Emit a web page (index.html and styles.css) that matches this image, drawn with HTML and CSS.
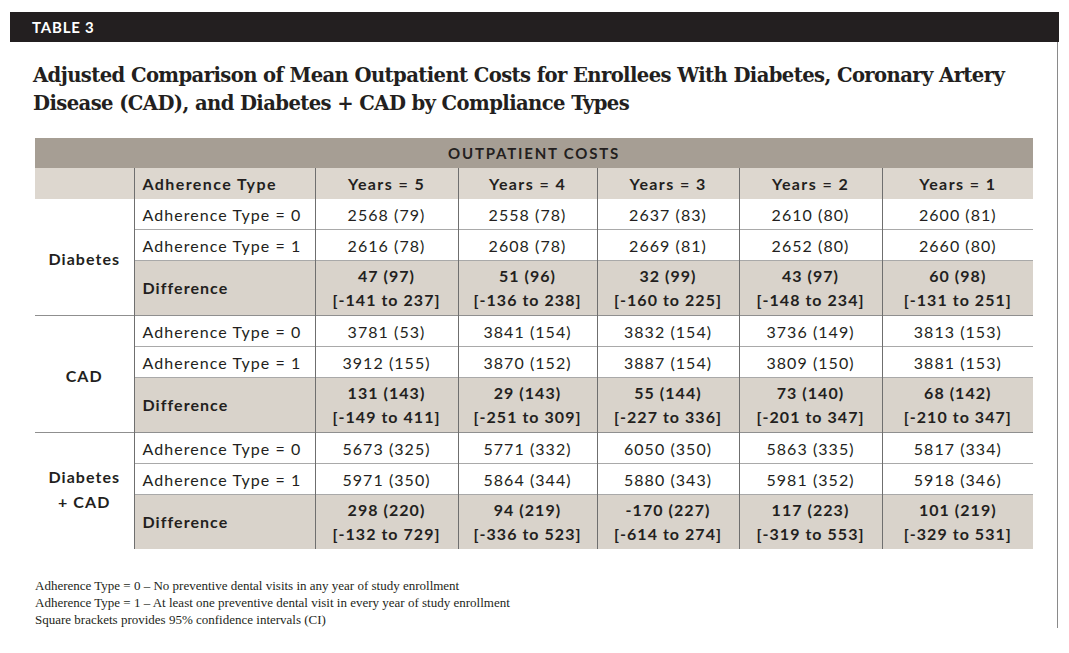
FILE: index.html
```html
<!DOCTYPE html>
<html>
<head>
<meta charset="utf-8">
<link rel="stylesheet" href="styles.css">
</head>
<body>
<div class="frame">
  <div class="bar">TABLE 3</div>
  <h1 class="title">Adjusted Comparison of Mean Outpatient Costs for Enrollees With Diabetes, Coronary Artery Disease (CAD), and Diabetes + CAD by Compliance Types</h1>
  <table class="data">
    <colgroup>
      <col class="c0"><col class="c1"><col class="c2"><col class="c3"><col class="c4"><col class="c5"><col class="c6">
    </colgroup>
    <thead>
      <tr class="h1row"><th colspan="7">OUTPATIENT COSTS</th></tr>
      <tr class="h2row">
        <th class="blank"></th>
        <th class="lab">Adherence Type</th>
        <th>Years = 5</th><th>Years = 4</th><th>Years = 3</th><th>Years = 2</th><th>Years = 1</th>
      </tr>
    </thead>
    <tbody>
      <tr class="r0 first">
        <td class="grp" rowspan="3">Diabetes</td>
        <td class="lab">Adherence Type = 0</td>
        <td>2568 (79)</td><td>2558 (78)</td><td>2637 (83)</td><td>2610 (80)</td><td>2600 (81)</td>
      </tr>
      <tr class="r1">
        <td class="lab">Adherence Type = 1</td>
        <td>2616 (78)</td><td>2608 (78)</td><td>2669 (81)</td><td>2652 (80)</td><td>2660 (80)</td>
      </tr>
      <tr class="diff">
        <td class="lab">Difference</td>
        <td>47 (97)<br>[-141 to 237]</td><td>51 (96)<br>[-136 to 238]</td><td>32 (99)<br>[-160 to 225]</td><td>43 (97)<br>[-148 to 234]</td><td>60 (98)<br>[-131 to 251]</td>
      </tr>
      <tr class="r0 sep">
        <td class="grp" rowspan="3">CAD</td>
        <td class="lab">Adherence Type = 0</td>
        <td>3781 (53)</td><td>3841 (154)</td><td>3832 (154)</td><td>3736 (149)</td><td>3813 (153)</td>
      </tr>
      <tr class="r1">
        <td class="lab">Adherence Type = 1</td>
        <td>3912 (155)</td><td>3870 (152)</td><td>3887 (154)</td><td>3809 (150)</td><td>3881 (153)</td>
      </tr>
      <tr class="diff">
        <td class="lab">Difference</td>
        <td>131 (143)<br>[-149 to 411]</td><td>29 (143)<br>[-251 to 309]</td><td>55 (144)<br>[-227 to 336]</td><td>73 (140)<br>[-201 to 347]</td><td>68 (142)<br>[-210 to 347]</td>
      </tr>
      <tr class="r0 sep">
        <td class="grp two" rowspan="3">Diabetes<br>+ CAD</td>
        <td class="lab">Adherence Type = 0</td>
        <td>5673 (325)</td><td>5771 (332)</td><td>6050 (350)</td><td>5863 (335)</td><td>5817 (334)</td>
      </tr>
      <tr class="r1">
        <td class="lab">Adherence Type = 1</td>
        <td>5971 (350)</td><td>5864 (344)</td><td>5880 (343)</td><td>5981 (352)</td><td>5918 (346)</td>
      </tr>
      <tr class="diff">
        <td class="lab">Difference</td>
        <td>298 (220)<br>[-132 to 729]</td><td>94 (219)<br>[-336 to 523]</td><td>-170 (227)<br>[-614 to 274]</td><td>117 (223)<br>[-319 to 553]</td><td>101 (219)<br>[-329 to 531]</td>
      </tr>
    </tbody>
  </table>
  <div class="notes">
    <p>Adherence Type = 0 – No preventive dental visits in any year of study enrollment</p>
    <p>Adherence Type = 1 – At least one preventive dental visit in every year of study enrollment</p>
    <p>Square brackets provides 95% confidence intervals (CI)</p>
  </div>
</div>
</body>
</html>
```
FILE: styles.css
```css
html, body {
  margin: 0;
  padding: 0;
  background: #ffffff;
}

.frame {
  margin: 12px 0 0 10px;
  width: 1048px;
  min-height: 613px;
  border-right: 1px solid #8a8a8a;
  box-sizing: border-box;
}

.bar {
  background: #231f20;
  height: 30px;
  margin-right: -2px;
  color: #ffffff;
  font-family: "Lato", "Liberation Sans", sans-serif;
  font-weight: 700;
  font-size: 15px;
  letter-spacing: 0.8px;
  line-height: 31px;
  padding-left: 22px;
  box-sizing: border-box;
}

.title {
  margin: 20px 0 0 23px;
  width: 1010px;
  font-family: "DejaVu Serif", "Liberation Serif", serif;
  font-weight: 700;
  font-size: 19.6px;
  line-height: 28px;
  letter-spacing: -0.6px;
  color: #231f20;
}

.data {
  margin: 20px 0 0 25px;
  border-collapse: collapse;
  table-layout: fixed;
  width: 998px;
  font-family: "Lato", "Liberation Sans", sans-serif;
  font-size: 16px;
  letter-spacing: 1.05px;
  color: #231f20;
}

.c0 { width: 99px; }
.c1 { width: 181px; }
.c2 { width: 143px; }
.c3 { width: 139px; }
.c4 { width: 142px; }
.c5 { width: 143px; }
.c6 { width: 151px; }

.data th, .data td {
  padding: 0;
  text-align: center;
  vertical-align: middle;
}

.h1row th {
  background: #a69e94;
  height: 30px;
  font-weight: 700;
  font-size: 15px;
  letter-spacing: 1.8px;
}

.h2row th {
  background: #ddd7cf;
  height: 31px;
  font-weight: 700;
  letter-spacing: 1.4px;
  border-left: 1.5px solid #6f6f6f;
}

.h2row th.blank {
  border-left: none;
}

.data th.lab, .data td.lab {
  text-align: left;
  padding-left: 8px;
}

.data tbody td {
  border-left: 1.5px solid #6f6f6f;
}

.data tbody td.grp {
  border-left: none;
  background: #ffffff;
  font-weight: 700;
  padding-top: 2px;
}

.data tbody td.grp.two {
  line-height: 25px;
  padding-top: 0;
  padding-bottom: 4px;
}

.r0 td, .r1 td {
  height: 30px;
  background: #ffffff;
}

.r1 td {
  border-top: 1px solid #a9a9a9;
}

.diff td {
  height: 54px;
  background: #d9d3cb;
  font-weight: 700;
  line-height: 24px;
  border-top: 1px solid #a9a9a9;
}

.sep td {
  border-top: 1px solid #8f8f8f;
}

.notes {
  margin: 28px 0 0 25px;
  font-family: "Liberation Serif", serif;
  font-size: 13px;
  line-height: 17px;
  color: #231f20;
}

.notes p {
  margin: 0;
}
```
